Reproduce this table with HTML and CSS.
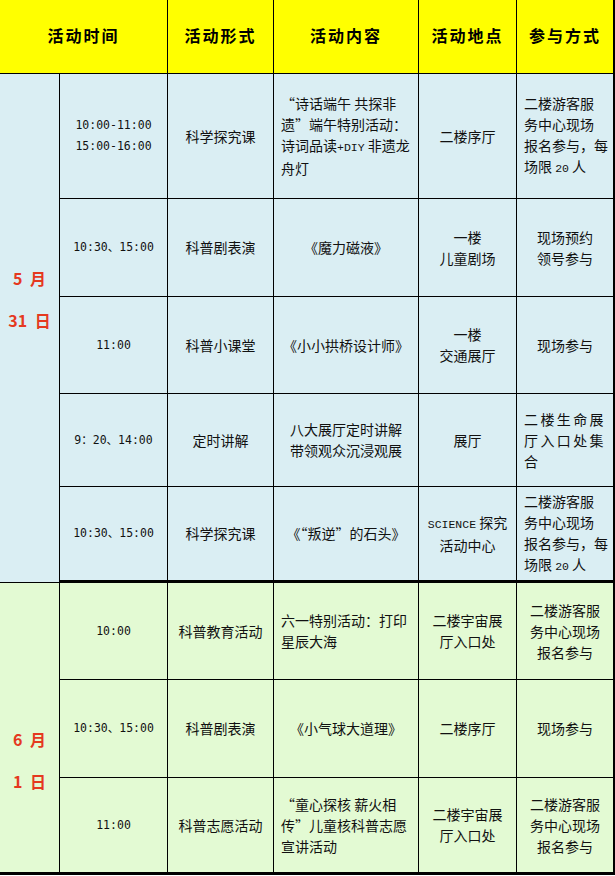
FILE: index.html
```html
<!DOCTYPE html>
<html lang="zh-CN">
<head>
<meta charset="utf-8">
<title>活动安排</title>
<link rel="stylesheet" href="styles.css">
</head>
<body>
<div class="sheet">
  <div class="c hd span2"><div>活动时间</div></div>
  <div class="c hd"><div>活动形式</div></div>
  <div class="c hd"><div>活动内容</div></div>
  <div class="c hd"><div>活动地点</div></div>
  <div class="c hd last"><div>参与方式</div></div>

  <div class="c date blue d1"><div>5 月</div><div>31 日</div></div>
  <div class="c blue time"><div>10:00-11:00<br>15:00-16:00</div></div>
  <div class="c blue"><div>科学探究课</div></div>
  <div class="c blue left"><div>“诗话端午 共探非<br>遗”端午特别活动：<br>诗词品读<span class="lat">+DIY</span> 非遗龙<br>舟灯</div></div>
  <div class="c blue"><div>二楼序厅</div></div>
  <div class="c blue left last"><div>二楼游客服<br>务中心现场<br>报名参与，每<br>场限 <span class="lat">20</span> 人</div></div>

  <div class="c blue time"><div>10:30、15:00</div></div>
  <div class="c blue"><div>科普剧表演</div></div>
  <div class="c blue"><div>《魔力磁液》</div></div>
  <div class="c blue"><div>一楼<br>儿童剧场</div></div>
  <div class="c blue last"><div>现场预约<br>领号参与</div></div>

  <div class="c blue time"><div>11:00</div></div>
  <div class="c blue"><div>科普小课堂</div></div>
  <div class="c blue"><div>《小小拱桥设计师》</div></div>
  <div class="c blue"><div>一楼<br>交通展厅</div></div>
  <div class="c blue last"><div>现场参与</div></div>

  <div class="c blue time"><div>9：20、14:00</div></div>
  <div class="c blue"><div>定时讲解</div></div>
  <div class="c blue"><div>八大展厅定时讲解<br>带领观众沉浸观展</div></div>
  <div class="c blue"><div>展厅</div></div>
  <div class="c blue left last wide"><div>二楼生命展<br>厅入口处集<br>合</div></div>

  <div class="c blue time endg"><div>10:30、15:00</div></div>
  <div class="c blue endg"><div>科学探究课</div></div>
  <div class="c blue endg"><div>《“叛逆”的石头》</div></div>
  <div class="c blue endg"><div><span class="lat">SCIENCE</span> 探究<br>活动中心</div></div>
  <div class="c blue left last endg"><div>二楼游客服<br>务中心现场<br>报名参与，每<br>场限 <span class="lat">20</span> 人</div></div>

  <div class="c date green d2 endg"><div>6 月</div><div>1 日</div></div>
  <div class="c green time"><div>10:00</div></div>
  <div class="c green"><div>科普教育活动</div></div>
  <div class="c green left"><div>六一特别活动：打印<br>星辰大海</div></div>
  <div class="c green"><div>二楼宇宙展<br>厅入口处</div></div>
  <div class="c green last"><div>二楼游客服<br>务中心现场<br>报名参与</div></div>

  <div class="c green time"><div>10:30、15:00</div></div>
  <div class="c green"><div>科普剧表演</div></div>
  <div class="c green"><div>《小气球大道理》</div></div>
  <div class="c green"><div>二楼序厅</div></div>
  <div class="c green last"><div>现场参与</div></div>

  <div class="c green time endg"><div>11:00</div></div>
  <div class="c green endg"><div>科普志愿活动</div></div>
  <div class="c green left endg"><div>“童心探核 薪火相<br>传”儿童核科普志愿<br>宣讲活动</div></div>
  <div class="c green endg"><div>二楼宇宙展<br>厅入口处</div></div>
  <div class="c green last endg"><div>二楼游客服<br>务中心现场<br>报名参与</div></div>
</div>
</body>
</html>
```

FILE: styles.css
```css
html, body {
  margin: 0;
  padding: 0;
  background: #ffffff;
}

.sheet {
  display: grid;
  grid-template-columns: 60px 108px 106px 145px 98px 98px;
  grid-template-rows: 74px 125px 98px 97px 93px 96px 97px 98px 97px;
  width: 615px;
  font-family: "Noto Sans CJK SC", "Noto Sans", sans-serif;
  font-size: 14px;
  line-height: 21px;
  color: #111111;
}

.c {
  box-sizing: border-box;
  border-right: 1px solid #000;
  border-bottom: 1px solid #000;
  display: flex;
  align-items: center;
  justify-content: center;
  text-align: center;
  white-space: nowrap;
  overflow: hidden;
}

.last {
  border-right: 2px solid #000;
}

.endg {
  border-bottom: 3px solid #000;
}

.span2 {
  grid-column: span 2;
}

.hd {
  background: #ffff00;
  font-weight: 700;
  font-size: 16px;
  letter-spacing: 2px;
  color: #000;
  padding-bottom: 2px;
}

.blue {
  background: #daeef3;
}

.green {
  background: #e3fad3;
}

.left {
  justify-content: flex-start;
  text-align: left;
  padding-left: 7px;
}

.wide {
  letter-spacing: 2.4px;
}

.time {
  font-family: "DejaVu Sans Mono", "Noto Sans CJK SC", monospace;
  font-size: 11.5px;
}

.lat {
  font-family: "Liberation Mono", monospace;
  font-size: 11.5px;
}

.date {
  flex-direction: column;
  color: #e5391f;
  font-weight: 700;
  font-size: 16px;
  line-height: 42px;
  word-spacing: 4px;
}

.d1 {
  grid-row: span 5;
  padding-bottom: 58px;
}

.d2 {
  grid-row: span 3;
  padding-top: 64px;
}
```
